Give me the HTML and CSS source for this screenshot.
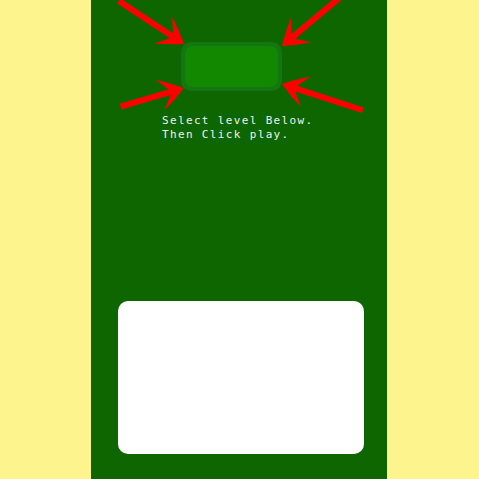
FILE: index.html
```html
<!DOCTYPE html>
<html>
<head>
<meta charset="utf-8">
<link rel="stylesheet" href="styles.css">
</head>
<body>
<main class="panel">
  <div class="play-btn"><div class="play-inner"></div></div>
  <p class="hint">Select level Below.<br>Then Click play.</p>
  <div class="level-box"></div>
  <svg class="arrows" viewBox="91 0 296 479" width="296" height="479">
    <g fill="#ff0000">
      <path transform="translate(184,44) rotate(33.5)" d="M0,0 Q-12,-9 -25,-16 Q-18,-7 -15,-3 L-78,-3 L-78,3 L-15,3 Q-18,7 -25,16 Q-12,9 0,0 Z"/>
      <path transform="translate(282,46) rotate(140)" d="M0,0 Q-12,-9 -25,-16 Q-18,-7 -15,-3 L-78,-3 L-78,3 L-15,3 Q-18,7 -25,16 Q-12,9 0,0 Z"/>
      <path transform="translate(184,88) rotate(-16.3)" d="M0,0 Q-12,-9 -25,-16 Q-18,-7 -15,-3 L-66,-3 L-66,3 L-15,3 Q-18,7 -25,16 Q-12,9 0,0 Z"/>
      <path transform="translate(282,84) rotate(198)" d="M0,0 Q-12,-9 -25,-16 Q-18,-7 -15,-3 L-85,-3 L-85,3 L-15,3 Q-18,7 -25,16 Q-12,9 0,0 Z"/>
    </g>
  </svg>
</main>
</body>
</html>
```
FILE: styles.css
```css
html, body {
  margin: 0;
  padding: 0;
  height: 100%;
}
body {
  background: #fdf48d;
  display: flex;
  font-family: "DejaVu Sans Mono", monospace;
}
.panel {
  position: relative;
  margin-left: 91px;
  width: 296px;
  min-height: 479px;
  background: #0d6600;
  display: flex;
  flex-direction: column;
  align-items: flex-start;
  padding-top: 42px;
  box-sizing: border-box;
  overflow: hidden;
}
.play-btn {
  margin-left: 90px;
  width: 101px;
  height: 49px;
  box-sizing: border-box;
  padding: 4px;
  border-radius: 10px;
  background: #137612;
}
.play-inner {
  width: 100%;
  height: 100%;
  border-radius: 8px;
  background: #128800;
}
.hint {
  margin: 23px 0 0 71px;
  color: #f0f0f0;
  font-size: 11px;
  line-height: 14px;
  letter-spacing: 1.35px;
}
.level-box {
  margin: 159px 0 0 27px;
  width: 246px;
  height: 153px;
  background: #ffffff;
  border-radius: 10px;
}
.arrows {
  position: absolute;
  left: 0;
  top: 0;
}
```
